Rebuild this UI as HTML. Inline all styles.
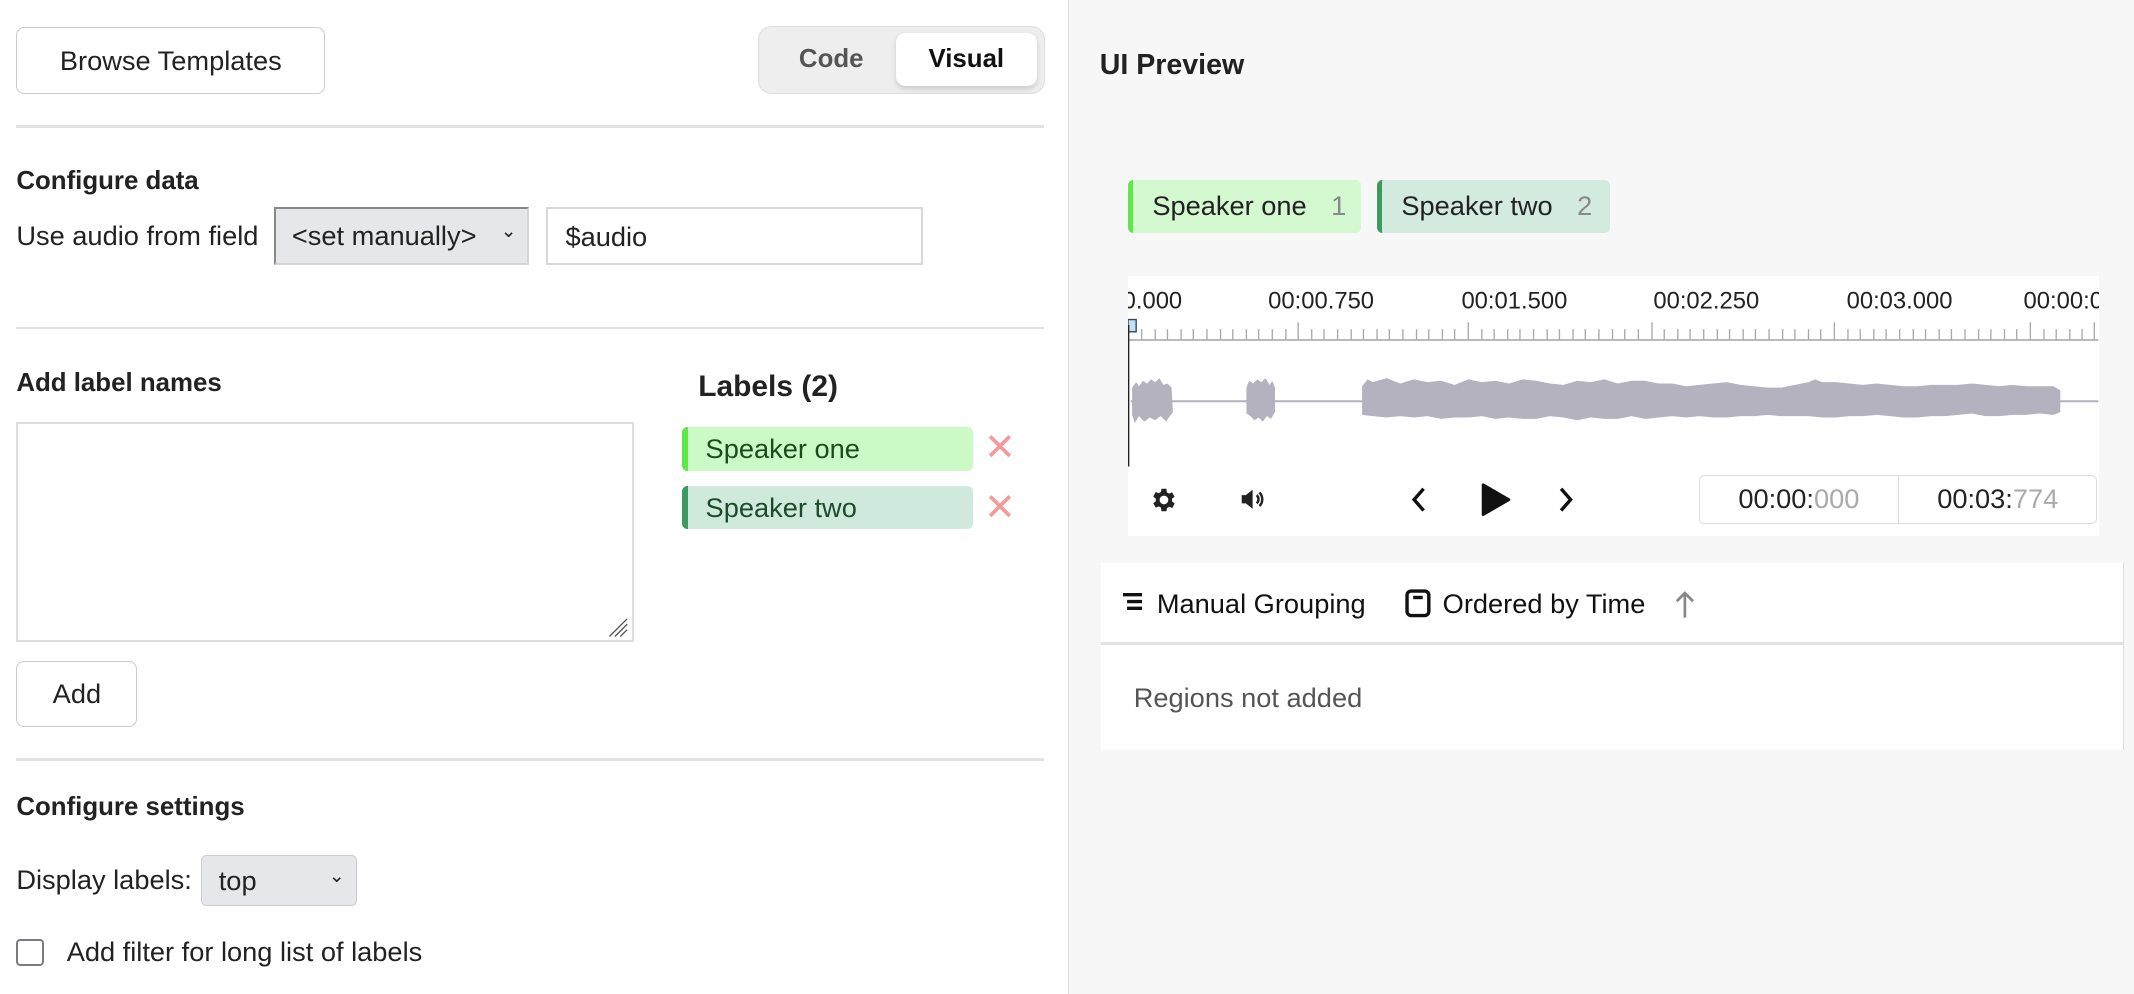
<!DOCTYPE html>
<html><head><meta charset="utf-8"><style>
html,body{margin:0;padding:0;width:2134px;height:994px;overflow:hidden;background:#fff}
#w{zoom:1.361;position:relative;width:1568px;height:730px;font-family:"Liberation Sans",Arial,sans-serif;color:#222}
.a{position:absolute}
.btn{border:1px solid #ccc;border-radius:6px;background:#fff;box-sizing:border-box;display:flex;align-items:center;justify-content:center;font-size:20px;color:#222}
.hr{position:absolute;left:12px;width:755px;height:2px;background:#e3e3e3}
.h{font-weight:bold;font-size:19px}
.t{font-size:20px}
.chip{position:absolute;box-sizing:border-box;border-radius:4px;font-size:20px;display:flex;align-items:center}
.x{position:absolute;color:#f39a9a;font-size:28px;line-height:1}
</style></head><body><div id="w">
<div class="a" style="left:785px;top:0;width:783px;height:730px;background:#f7f7f7;border-left:1px solid #ddd"></div>

<div class="a btn" style="left:12px;top:20px;width:227px;height:49px">Browse Templates</div>
<div class="a" style="left:557px;top:19px;width:211px;height:50px;background:#eee;border:1px solid #ddd;box-sizing:border-box;border-radius:10px"></div>
<div class="a t" style="left:587px;top:33px;color:#555;font-weight:bold;font-size:19px">Code</div>
<div class="a" style="left:658px;top:24px;width:104px;height:39px;background:#fff;border-radius:7px;box-shadow:0 2px 4px rgba(0,0,0,.15);display:flex;align-items:center;justify-content:center;font-weight:bold;font-size:19px;color:#111">Visual</div>

<div class="hr" style="top:92px"></div>
<div class="a h" style="left:12px;top:123px">Configure data</div>
<div class="a t" style="left:12px;top:162px">Use audio from field</div>
<div class="a" style="left:201px;top:152px;width:188px;height:43px;box-sizing:border-box;background:#e6e7eb;border:2px solid #d5d5d5;border-top-color:#888;border-left-color:#888;font-size:20px;padding:8px 0 0 12px">&lt;set manually&gt;<span style="position:absolute;right:8px;top:8px;font-size:14px">&#8964;</span></div>
<div class="a" style="left:401px;top:152px;width:277px;height:43px;box-sizing:border-box;border:2px solid #d8d8d8;font-size:20px;padding:9px 0 0 13px">$audio</div>

<div class="hr" style="top:240px"></div>
<div class="a h" style="left:12px;top:271px">Add label names</div>
<div class="a" style="left:12px;top:310px;width:454px;height:162px;box-sizing:border-box;border:2px solid #ddd"></div>
<svg class="a" style="left:444px;top:450px" width="20" height="20"><path d="M4 18L17 5M8 18L17 9M12 18L17 13" stroke="#555" stroke-width="1"/></svg>
<div class="a btn" style="left:12px;top:486px;width:89px;height:48px">Add</div>

<div class="a" style="left:513px;top:272px;font-size:22px;font-weight:bold;color:#222">Labels (2)</div>
<div class="chip" style="left:501px;top:314px;width:214px;height:32px;background:#ccfac6;border-left:5px solid #5fe84a;padding-left:13px;color:#1e4a1c">Speaker one</div>
<div class="x" style="left:723px;top:315px">✕</div>
<div class="chip" style="left:501px;top:357px;width:214px;height:32px;background:#cfeadc;border-left:5px solid #3d9a5f;padding-left:13px;color:#1e4a2c">Speaker two</div>
<div class="x" style="left:723px;top:359px">✕</div>

<div class="hr" style="top:557px"></div>
<div class="a h" style="left:12px;top:583px">Configure settings</div>
<div class="a t" style="left:12px;top:635px">Display labels:</div>
<div class="a" style="left:148px;top:628px;width:114px;height:38px;box-sizing:border-box;background:#e6e7eb;border:1px solid #ccc;border-radius:4px;font-size:20px;padding:7px 0 0 12px">top<span style="position:absolute;right:8px;top:7px;font-size:14px">&#8964;</span></div>
<div class="a" style="left:12px;top:690px;width:20px;height:20px;box-sizing:border-box;border:2px solid #7a7a86;border-radius:3px"></div>
<div class="a t" style="left:49px;top:688px">Add filter for long list of labels</div>

<!-- right -->
<div class="a" style="left:808px;top:36px;font-size:21px;font-weight:bold;color:#222">UI Preview</div>
<div class="chip" style="left:829px;top:132px;width:171px;height:39px;background:#d4f8cf;border-left:4px solid #5fe84a;padding-left:14px;color:#222">Speaker one<span style="margin-left:18px;color:#888">1</span></div>
<div class="chip" style="left:1012px;top:132px;width:171px;height:39px;background:#d3eadf;border-left:4px solid #3d9a5f;padding-left:14px;color:#222">Speaker two<span style="margin-left:18px;color:#888">2</span></div>

<div class="a" style="left:829px;top:203px;width:713px;height:191px;background:#fff;overflow:hidden">
<svg width="713" height="191" style="position:absolute;left:0;top:0">
<g font-family="Liberation Sans,Arial,sans-serif" font-size="17.5" fill="#222">
<text x="-38" y="24">00:00.000</text><text x="103" y="24">00:00.750</text><text x="245" y="24">00:01.500</text><text x="386" y="24">00:02.250</text><text x="528" y="24">00:03.000</text><text x="658" y="24">00:00:03</text></g>
<line x1="0" y1="47" x2="713" y2="47" stroke="#bbb" stroke-width="1.5"/>
<g stroke="#aaa" stroke-width="1">
<path d="M10 39V47M20 39V47M29 39V47M39 39V47M48 39V47M58 39V47M68 39V47M77 39V47M87 39V47M96 39V47M106 39V47M116 39V47M135 39V47M144 39V47M154 39V47M164 39V47M173 39V47M183 39V47M192 39V47M202 39V47M212 39V47M221 39V47M231 39V47M240 39V47M260 39V47M269 39V47M279 39V47M288 39V47M298 39V47M308 39V47M317 39V47M327 39V47M336 39V47M346 39V47M356 39V47M365 39V47M375 39V47M394 39V47M404 39V47M413 39V47M423 39V47M433 39V47M442 39V47M452 39V47M461 39V47M471 39V47M481 39V47M490 39V47M500 39V47M509 39V47M529 39V47M538 39V47M548 39V47M557 39V47M567 39V47M577 39V47M586 39V47M596 39V47M605 39V47M615 39V47M625 39V47M634 39V47M644 39V47M653 39V47M673 39V47M682 39V47M692 39V47M701 39V47"/>
<path d="M125 34V47M250 34V47M385 34V47M519 34V47M663 34V47M710 34V47"/></g>
<rect x="0" y="32" width="6" height="9" fill="#bfe3f7" stroke="#345" stroke-width="1"/>
<line x1="0.5" y1="36" x2="0.5" y2="140" stroke="#222" stroke-width="1"/>
<line x1="2" y1="92" x2="713" y2="92" stroke="#b4b2be" stroke-width="1.5"/>
<g fill="#b4b2be">
<polygon points="3,82 6,78 8,81 11,77 14,79 17,76 20,78 23,75 26,80 29,79 32,82 33,100 30,104 28,107 24,103 20,106 16,104 12,107 8,103 5,108 3,102"/>
<polygon points="87,82 89,77 92,79 95,76 98,78 101,75 104,80 106,77 108,82 108,100 105,105 102,103 99,107 96,104 93,106 90,103 87,101"/>
<polygon points="172,81 176,76 180,78 190,75 200,79 210,76 220,78 230,77 240,80 250,76 260,78 270,77 280,79 290,76 300,77 310,79 320,80 330,77 340,78 350,76 360,79 370,77 380,77 390,79 400,79 410,81 420,80 430,79 440,78 450,80 460,81 470,82 480,82 490,80 500,78 505,76 510,78 520,78 530,79 540,80 550,79 560,80 570,81 580,81 590,80 600,80 610,80 620,79 630,80 640,81 650,80 660,81 670,81 680,81 685,84 685,100 680,102 670,101 660,102 650,102 640,103 630,103 620,101 610,102 600,103 590,103 580,104 570,104 560,103 550,102 540,103 530,103 520,104 510,104 500,103 490,103 480,103 470,102 460,103 450,103 440,104 430,104 420,103 410,104 400,103 390,104 380,105 370,103 360,105 350,105 340,104 330,106 320,104 310,103 300,105 290,105 280,104 270,105 260,103 250,104 240,104 230,105 220,103 210,104 200,103 190,104 180,103 172,102"/>
</g></svg>
<svg class="a" style="left:15px;top:153px" width="22" height="22" viewBox="0 0 24 24"><path fill="#222" d="M19.4 13a7.5 7.5 0 000-2l2.1-1.6-2-3.5-2.5 1a7 7 0 00-1.7-1L15 3h-4l-.4 2.6a7 7 0 00-1.7 1l-2.5-1-2 3.5L6.5 11a7.5 7.5 0 000 2l-2.1 1.6 2 3.5 2.5-1a7 7 0 001.7 1L11 21h4l.4-2.6a7 7 0 001.7-1l2.5 1 2-3.5zM13 15.5a3.5 3.5 0 110-7 3.5 3.5 0 010 7z" transform="translate(-1 0)"/></svg>
<svg class="a" style="left:81px;top:155px" width="20" height="18" viewBox="0 0 20 18"><path d="M2 6h3l5-4v14l-5-4H2z" fill="#222"/><path d="M13 6a4 4 0 010 6M15 4a7 7 0 010 10" stroke="#222" stroke-width="1.8" fill="none"/></svg>
<svg class="a" style="left:207px;top:154px" width="14" height="20"><path d="M10 2L3 10l7 8" stroke="#111" stroke-width="2.5" fill="none"/></svg>
<svg class="a" style="left:258px;top:151px" width="24" height="26"><path d="M3 2L22 13 3 24z" fill="#111" stroke="#111" stroke-width="2" stroke-linejoin="round"/></svg>
<svg class="a" style="left:315px;top:154px" width="14" height="20"><path d="M3 2l7 8-7 8" stroke="#111" stroke-width="2.5" fill="none"/></svg>
<div class="a" style="left:419px;top:146px;width:293px;height:36px;box-sizing:border-box;border:1px solid #ddd;border-radius:4px;font-size:20px;display:flex">
<div style="width:146px;border-right:1px solid #ddd;display:flex;align-items:center;justify-content:center">00:00:<span style="color:#aaa">000</span></div>
<div style="flex:1;display:flex;align-items:center;justify-content:center">00:03:<span style="color:#aaa">774</span></div></div>
</div>

<div class="a" style="left:809px;top:414px;width:751px;height:137px;background:#fff;border-right:1px solid #ddd">
<div style="position:absolute;left:0;top:58px;width:751px;height:2px;background:#e3e3e3"></div>
<svg class="a" style="left:16px;top:21px" width="16" height="16"><path d="M0 2h14M3 7h11M3 12h11" stroke="#111" stroke-width="2.5"/></svg>
<div class="a" style="left:41px;top:18px;font-size:20px;color:#111">Manual Grouping</div>
<svg class="a" style="left:223px;top:19px" width="20" height="22"><rect x="1.5" y="1.5" width="16" height="18" rx="3" fill="none" stroke="#111" stroke-width="2.5"/><rect x="6" y="5" width="7" height="2.5" fill="#111"/></svg>
<div class="a" style="left:251px;top:18px;font-size:20px;color:#111">Ordered by Time</div>
<svg class="a" style="left:421px;top:19px" width="16" height="22"><path d="M8 21V3M2 9l6-6 6 6" stroke="#888" stroke-width="2" fill="none"/></svg>
<div class="a" style="left:24px;top:87px;font-size:20px;color:#555">Regions not added</div>
</div>
</div></body></html>
